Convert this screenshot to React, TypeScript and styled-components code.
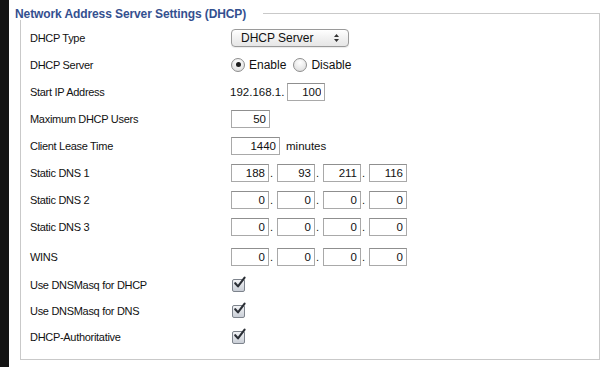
import React from 'react'
import styled, { createGlobalStyle } from 'styled-components'

const GlobalStyle = createGlobalStyle`
   html, body {
      margin: 0;
      padding: 0;
      background: #ffffff;
   }
   body {
      font-family: "Liberation Sans", Arial, sans-serif;
   }
`

interface IRow {
   label: string;
   height?: number;
   gapAbove?: number;
   children?: React.ReactNode;
}

function SettingRow({ label, height = 27, gapAbove = 0, children }: IRow) {
   return (
      <Row $height={height} $gapAbove={gapAbove}>
         <Label>{label}</Label>
         <Value>{children}</Value>
      </Row>
   )
}

function IpFields({ parts }: { parts: string[] }) {
   return (
      <>
         {parts.map((p, i) => (
            <React.Fragment key={i}>
               <TextBox $width={38} value={p} readOnly />
               {i < parts.length - 1 && <Dot>.</Dot>}
            </React.Fragment>
         ))}
      </>
   )
}

function Radio({ checked, label }: { checked?: boolean; label: string }) {
   return (
      <RadioLabel>
         <RadioCircle>{checked && <RadioDot />}</RadioCircle>
         {label}
      </RadioLabel>
   )
}

function CheckBox() {
   return (
      <CheckBoxFrame>
         <svg width="15" height="15" viewBox="0 0 15 15">
            <path d="M3.2 7.2 L6 10.4 L12.6 1.6" fill="none" stroke="#2b2f36" strokeWidth="2.1" strokeLinecap="round" strokeLinejoin="round" />
         </svg>
      </CheckBoxFrame>
   )
}

export default function App() {
   return (
      <Page>
         <GlobalStyle />
         <SideStrip />
         <Main>
            <Panel>
               <Header>
                  <Legend>Network Address Server Settings (DHCP)</Legend>
                  <Rule />
               </Header>
               <Body>
                  <SettingRow label="DHCP Type">
                     <SelectBox>
                        <span>DHCP Server</span>
                        <svg width="7" height="10" viewBox="0 0 7 10">
                           <path d="M1 4 L3.5 1 L6 4 Z M1 6 L3.5 9 L6 6 Z" fill="#333" />
                        </svg>
                     </SelectBox>
                  </SettingRow>
                  <SettingRow label="DHCP Server">
                     <Radio checked label="Enable" />
                     <Radio label="Disable" />
                  </SettingRow>
                  <SettingRow label="Start IP Address">
                     <Prefix>192.168.1.</Prefix>
                     <TextBox $width={38} value="100" readOnly />
                  </SettingRow>
                  <SettingRow label="Maximum DHCP Users">
                     <TextBox $width={39} value="50" readOnly />
                  </SettingRow>
                  <SettingRow label="Client Lease Time">
                     <TextBox $width={49} value="1440" readOnly />
                     <Suffix>minutes</Suffix>
                  </SettingRow>
                  <SettingRow label="Static DNS 1">
                     <IpFields parts={['188', '93', '211', '116']} />
                  </SettingRow>
                  <SettingRow label="Static DNS 2">
                     <IpFields parts={['0', '0', '0', '0']} />
                  </SettingRow>
                  <SettingRow label="Static DNS 3">
                     <IpFields parts={['0', '0', '0', '0']} />
                  </SettingRow>
                  <SettingRow label="WINS" gapAbove={3}>
                     <IpFields parts={['0', '0', '0', '0']} />
                  </SettingRow>
                  <SettingRow label="Use DNSMasq for DHCP" height={26} gapAbove={2}>
                     <CheckBox />
                  </SettingRow>
                  <SettingRow label="Use DNSMasq for DNS" height={26}>
                     <CheckBox />
                  </SettingRow>
                  <SettingRow label="DHCP-Authoritative" height={26}>
                     <CheckBox />
                  </SettingRow>
               </Body>
            </Panel>
         </Main>
      </Page>
   )
}


const Page = styled.div`
   display: flex;
   width: 610px;
   height: 367px;
   background: #ffffff;
   overflow: hidden;
`

const SideStrip = styled.div`
   width: 9px;
   flex-shrink: 0;
   background: #141414;
`

const Main = styled.div`
   flex: 1;
   padding-left: 6px;
`

const Panel = styled.div`
   width: 585px;
`

const Header = styled.div`
   display: flex;
   height: 20px;
`

const Legend = styled.div`
   margin-top: 7px;
   line-height: 14px;
   font-size: 12px;
   font-weight: bold;
   letter-spacing: -0.1px;
   color: #34508f;
   white-space: nowrap;
`

const Rule = styled.div`
   flex: 1;
   margin-left: 17px;
   margin-top: 13px;
   border-top: 1px solid #c9c9c9;
   border-right: 1px solid #c9c9c9;
`

const Body = styled.div`
   margin-left: 5px;
   height: 340px;
   box-sizing: border-box;
   padding: 4px 0 0 9px;
   border: 1px solid #c9c9c9;
   border-top: none;
`

const Row = styled.div<{ $height: number; $gapAbove: number }>`
   display: flex;
   align-items: center;
   height: ${p => p.$height}px;
   margin-top: ${p => p.$gapAbove}px;
`

const Label = styled.div`
   width: 201px;
   font-size: 11px;
   letter-spacing: -0.3px;
   color: #111;
`

const Value = styled.div`
   display: flex;
   align-items: center;
   font-size: 11px;
   color: #111;
`

const SelectBox = styled.div`
   display: flex;
   align-items: center;
   justify-content: space-between;
   box-sizing: border-box;
   width: 118px;
   height: 18px;
   padding: 0 8px 0 9px;
   border: 1px solid #9a9a9a;
   border-radius: 4px;
   background: linear-gradient(#ffffff, #f1f1f1 50%, #e6e6e6);
   box-shadow: 0 1px 1px rgba(0, 0, 0, 0.08);
   font-size: 12px;
   color: #111;
`

const RadioLabel = styled.label`
   display: flex;
   align-items: center;
   gap: 4px;
   margin-right: 7px;
   font-size: 12px;
   color: #111;
`

const RadioCircle = styled.span`
   display: flex;
   align-items: center;
   justify-content: center;
   box-sizing: border-box;
   width: 14px;
   height: 14px;
   border-radius: 50%;
   border: 1px solid #8e8e8e;
   background: radial-gradient(circle at 50% 30%, #ffffff, #e4e4e4 70%, #d4d4d4);
`

const RadioDot = styled.span`
   width: 5px;
   height: 5px;
   border-radius: 50%;
   background: #1e1e1e;
`

const TextBox = styled.input<{ $width: number }>`
   box-sizing: border-box;
   width: ${p => p.$width}px;
   height: 18px;
   margin: 0;
   padding: 0 3px 0 0;
   border: 1px solid #a9a9a9;
   border-top-color: #8f8f8f;
   background: #ffffff;
   font-family: "Liberation Sans", Arial, sans-serif;
   font-size: 11.5px;
   color: #111;
   text-align: right;
   outline: none;
`

const Dot = styled.span`
   width: 8px;
   padding-left: 1px;
   box-sizing: border-box;
   font-size: 11px;
`

const Prefix = styled.span`
   margin-left: -1px;
   margin-right: 3px;
   font-size: 11.5px;
`

const Suffix = styled.span`
   margin-left: 6px;
   font-size: 11.5px;
`

const CheckBoxFrame = styled.span`
   position: relative;
   display: block;
   box-sizing: border-box;
   width: 13px;
   height: 13px;
   margin-left: 1px;
   border: 1px solid #7d838c;
   border-radius: 2px;
   background: linear-gradient(#f2f3f5, #c9ced6);

   svg {
      position: absolute;
      left: -1px;
      top: -4px;
   }
`
